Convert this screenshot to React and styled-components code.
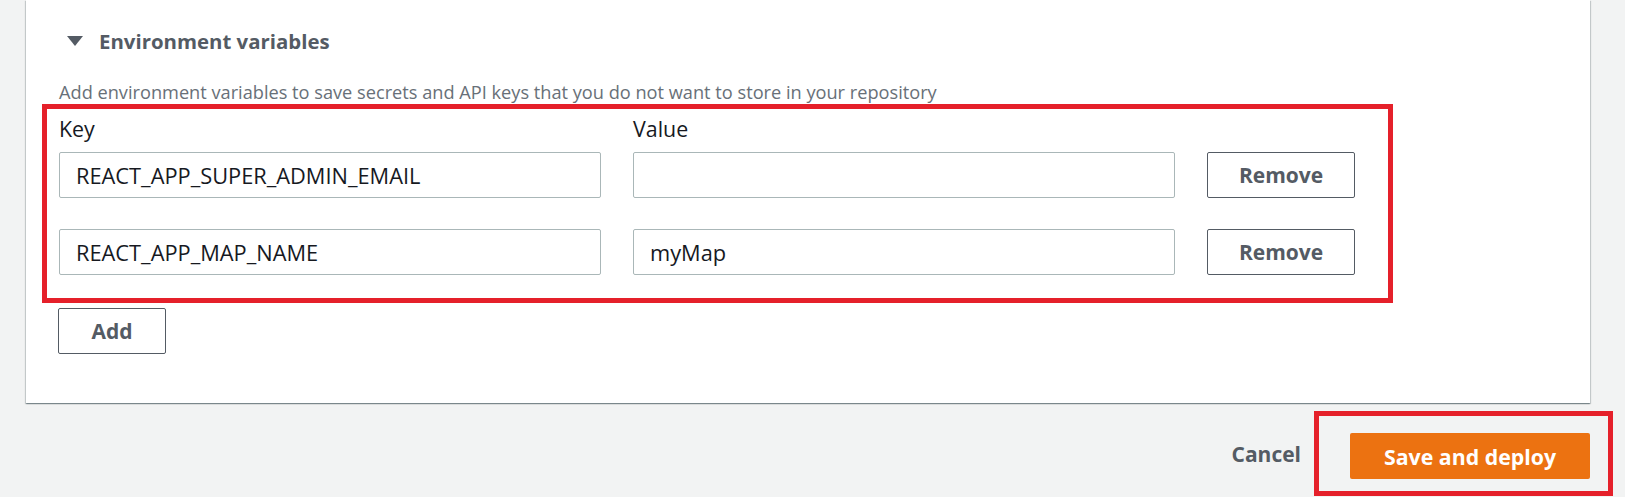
import React from "react";
import styled, { createGlobalStyle } from "styled-components";

const GlobalStyle = createGlobalStyle`
  html, body { margin: 0; padding: 0; }
  body {
    background: #f2f3f3;
    font-family: "Open Sans", "Noto Sans", sans-serif;
    color: #16191f;
  }
  * { box-sizing: border-box; }
`;

const Page = styled.div`
  width: 1625px;
  height: 497px;
  overflow: hidden;
`;

const Card = styled.section`
  margin-left: 26px;
  width: 1564px;
  background: #fff;
  box-shadow: 0 1px 1px 0 rgba(0, 28, 36, 0.3), 1px 1px 1px 0 rgba(0, 28, 36, 0.15),
    -1px 1px 1px 0 rgba(0, 28, 36, 0.15);
  padding: 28px 0 49px 33px;
`;

const ExpandHeader = styled.div`
  display: flex;
  align-items: center;
  gap: 16px;
  height: 26px;
  margin-left: 8px;
  color: #545b64;
  font-weight: 700;
  font-size: 20.4px;
`;

const Caret = styled.svg`
  width: 16px;
  height: 10px;
  fill: #545b64;
`;

const Description = styled.p`
  margin: 26px 0 0;
  font-size: 18.2px;
  line-height: 24px;
  color: #687078;
`;

const Annotation = styled.div`
  border: 5px solid #e5202a;
  display: ${(p) => (p.$inline ? "inline-block" : "block")};
`;

const EnvBox = styled(Annotation)`
  width: 1351px;
  margin: 0 0 0 -17px;
  padding: 4px 33px 23px 12px;
`;

const Grid = styled.div`
  display: grid;
  grid-template-columns: 542px 542px 148px;
  column-gap: 32px;
`;

const Label = styled.div`
  font-size: 21.4px;
  line-height: 28px;
  color: #16191f;
  padding-top: 2px;
  height: 39px;
`;

const Input = styled.div`
  height: 46px;
  border: 1px solid #aab7b8;
  border-radius: 2px;
  padding: 0 16px;
  display: flex;
  align-items: center;
  font-size: 21.8px;
  color: #16191f;
  background: #fff;
  white-space: nowrap;
`;

const Row = styled(Grid)`
  margin-top: ${(p) => p.$gap}px;
`;

const Button = styled.button`
  height: 46px;
  border: 1px solid #545b64;
  border-radius: 2px;
  background: #fff;
  color: #545b64;
  font-family: "Open Sans", sans-serif;
  font-weight: 700;
  font-size: 21px;
  padding: 0;
  width: ${(p) => p.$width}px;
`;

const AddButton = styled(Button)`
  margin-top: 5px;
  margin-left: -1px;
`;

const Footer = styled.div`
  display: flex;
  justify-content: flex-end;
  align-items: center;
  margin-top: 8px;
  padding-right: 12px;
`;

const CancelLink = styled.button`
  background: none;
  border: none;
  padding: 0;
  margin-right: 13px;
  color: #545b64;
  font-family: "Open Sans", sans-serif;
  font-weight: 700;
  font-size: 21px;
`;

const SaveBox = styled(Annotation)`
  padding: 17px 18px 12px 31px;
`;

const PrimaryButton = styled.button`
  display: block;
  width: 240px;
  height: 46px;
  border: none;
  border-radius: 2px;
  background: #ec7211;
  color: #fff;
  font-family: "Open Sans", sans-serif;
  font-weight: 700;
  font-size: 21.3px;
`;

const rows = [
  { key: "REACT_APP_SUPER_ADMIN_EMAIL", value: "" },
  { key: "REACT_APP_MAP_NAME", value: "myMap" },
];

export default function App() {
  return (
    <Page>
      <GlobalStyle />
      <Card>
        <ExpandHeader>
          <Caret viewBox="0 0 16 10">
            <polygon points="0,0 16,0 8,10" />
          </Caret>
          Environment variables
        </ExpandHeader>
        <Description>
          Add environment variables to save secrets and API keys that you do not want to store in your repository
        </Description>
        <EnvBox>
          <Grid>
            <Label>Key</Label>
            <Label>Value</Label>
          </Grid>
          {rows.map((r, i) => (
            <Row key={r.key} $gap={i === 0 ? 0 : 31}>
              <Input>{r.key}</Input>
              <Input>{r.value}</Input>
              <Button $width={148}>Remove</Button>
            </Row>
          ))}
        </EnvBox>
        <AddButton $width={108}>Add</AddButton>
      </Card>
      <Footer>
        <CancelLink>Cancel</CancelLink>
        <SaveBox $inline>
          <PrimaryButton>Save and deploy</PrimaryButton>
        </SaveBox>
      </Footer>
    </Page>
  );
}
